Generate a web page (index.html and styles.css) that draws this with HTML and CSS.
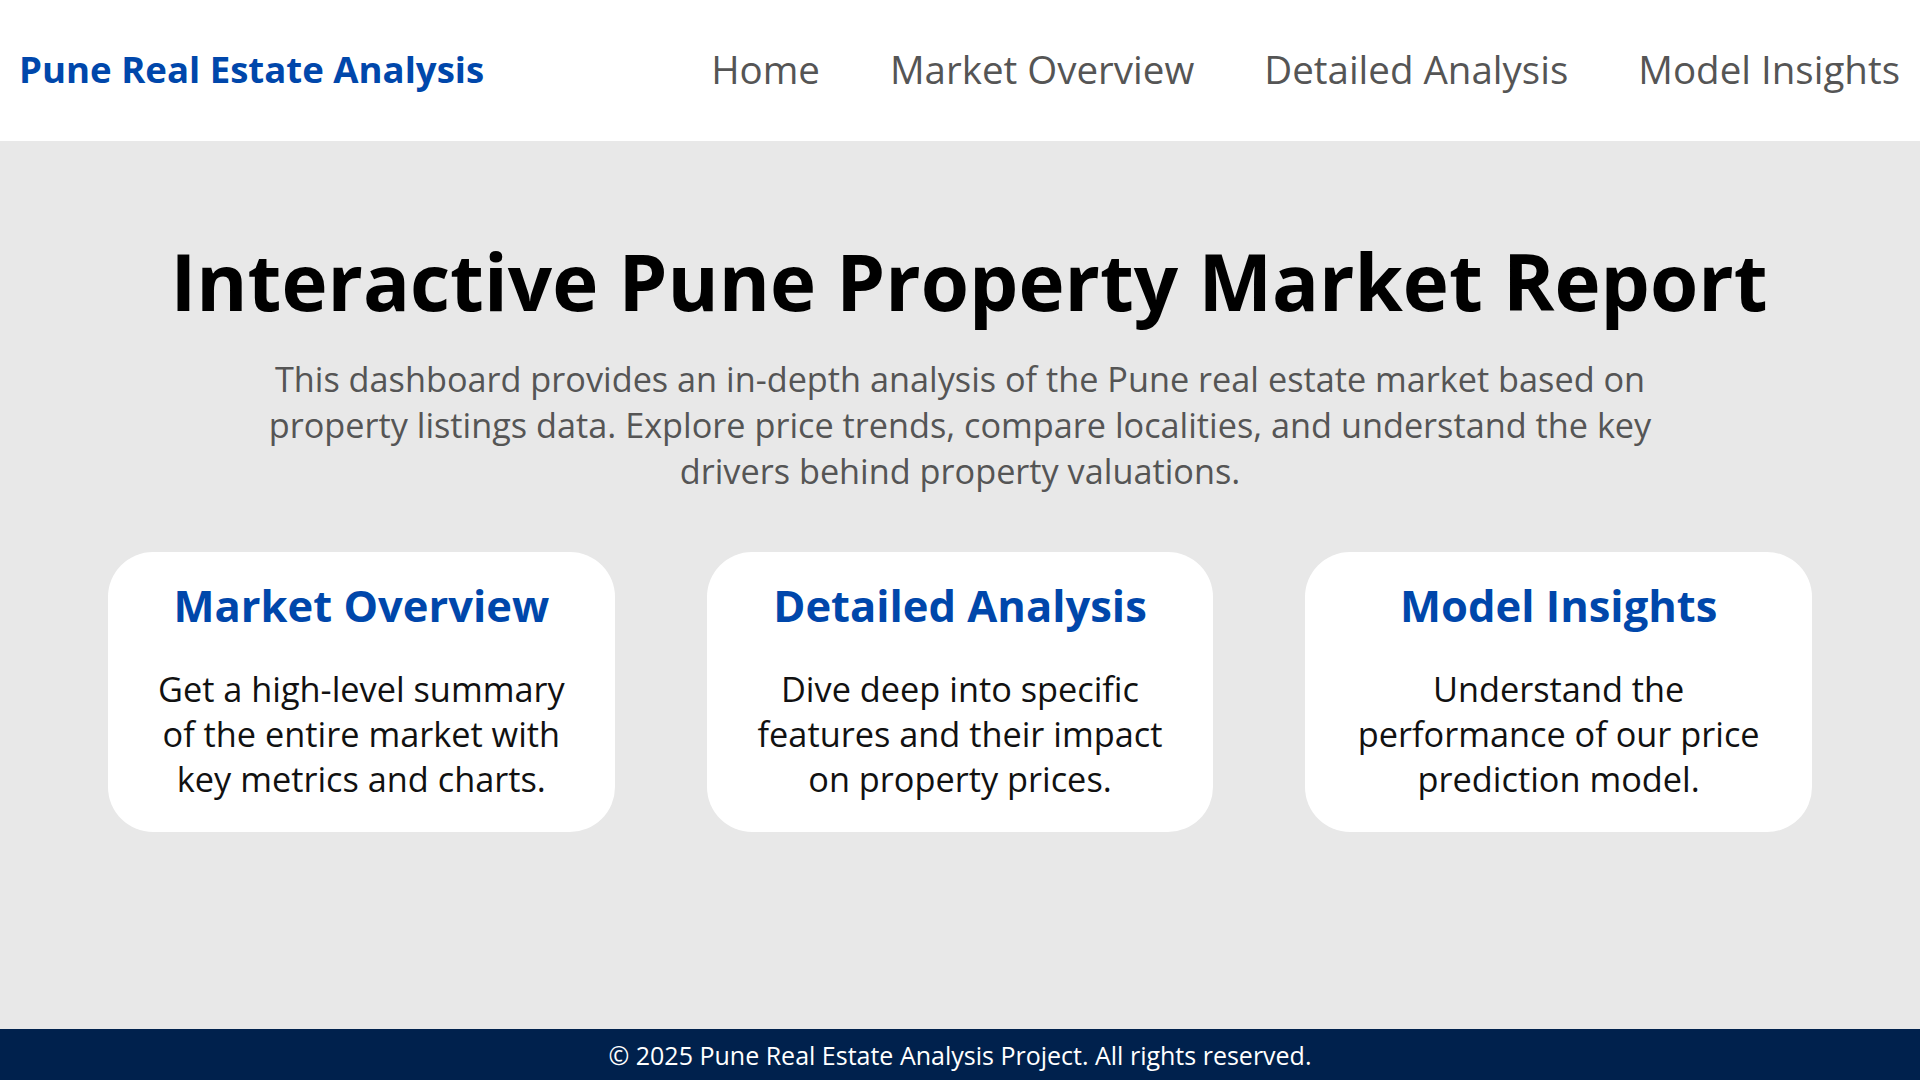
FILE: index.html
```html
<!DOCTYPE html>
<html lang="en">
<head>
<meta charset="utf-8">
<title>Pune Real Estate Analysis</title>
<link rel="stylesheet" href="styles.css">
</head>
<body>
<header class="site-header">
  <a class="brand" href="#">Pune Real Estate Analysis</a>
  <nav class="main-nav">
    <a class="nav-link" href="#">Home</a>
    <a class="nav-link" href="#">Market Overview</a>
    <a class="nav-link" href="#">Detailed Analysis</a>
    <a class="nav-link" href="#">Model Insights</a>
  </nav>
</header>
<main class="hero">
  <h1 class="hero-title">Interactive Pune Property Market Report</h1>
  <p class="hero-text">This dashboard provides an in-depth analysis of the Pune real estate market based on property listings data. Explore price trends, compare localities, and understand the key drivers behind property valuations.</p>
  <section class="cards">
    <article class="card">
      <h2 class="card-title">Market Overview</h2>
      <p class="card-text">Get a high-level summary of the entire market with key metrics and charts.</p>
    </article>
    <article class="card">
      <h2 class="card-title">Detailed Analysis</h2>
      <p class="card-text">Dive deep into specific features and their impact on property prices.</p>
    </article>
    <article class="card">
      <h2 class="card-title">Model Insights</h2>
      <p class="card-text">Understand the performance of our price prediction model.</p>
    </article>
  </section>
</main>
<footer class="site-footer">
  <p class="footer-text">© 2025 Pune Real Estate Analysis Project. All rights reserved.</p>
</footer>
</body>
</html>
```
FILE: styles.css
```css
* { box-sizing: border-box; }
html, body { margin: 0; padding: 0; }
body {
  font-family: "Open Sans", "Noto Sans", sans-serif;
  min-height: 100vh;
  display: flex;
  flex-direction: column;
  background: #e8e8e8;
}
.site-header {
  height: 141px;
  background: #ffffff;
  display: flex;
  align-items: center;
  justify-content: space-between;
  padding: 0 20px 4px 19px;
}
.brand {
  font-size: 36.6px;
  font-weight: 700;
  color: #0047ab;
  text-decoration: none;
}
.main-nav {
  display: flex;
  gap: 70px;
}
.nav-link {
  font-size: 38.5px;
  color: #555555;
  text-decoration: none;
}
.hero {
  flex: 1;
  display: flex;
  flex-direction: column;
  align-items: center;
  padding: 94px 0 40px;
}
.hero-title {
  margin: 0 0 27px;
  font-size: 78px;
  line-height: 1.2;
  font-weight: 700;
  color: #000000;
  text-align: center;
  padding-left: 18px;
}
.hero-text {
  margin: 0;
  max-width: 1460px;
  font-size: 34.25px;
  line-height: 46px;
  color: #555555;
  text-align: center;
}
.cards {
  margin-top: 58px;
  width: 1704px;
  display: grid;
  grid-template-columns: repeat(3, 1fr);
  gap: 92px;
}
.card {
  background: #ffffff;
  border-radius: 45px;
  padding: 28px 40px 30px;
  text-align: center;
}
.card-title {
  margin: 0 0 34px;
  font-size: 43.5px;
  line-height: 1.2;
  font-weight: 700;
  color: #0047ab;
}
.card-text {
  margin: 0;
  font-size: 34.3px;
  line-height: 45.3px;
  color: #111111;
}
.site-footer {
  height: 51px;
  background: #00214d;
  display: flex;
  align-items: center;
  justify-content: center;
}
.footer-text {
  margin: 0;
  font-size: 25px;
  color: #ffffff;
}
```
